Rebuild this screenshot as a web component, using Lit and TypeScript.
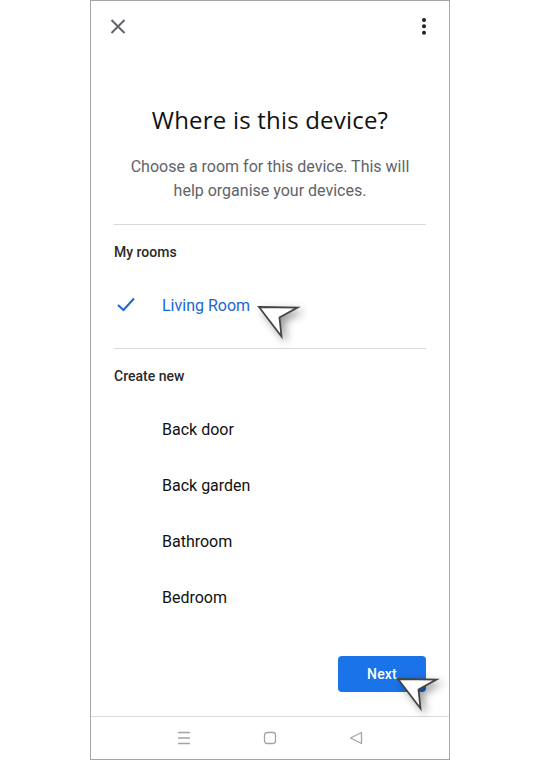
import { LitElement, html, css, svg } from 'lit';
import { customElement } from 'lit/decorators.js';

const newRooms = ['Back door', 'Back garden', 'Bathroom', 'Bedroom'];

// the tutorial arrow, tip at the top left of its box
const pointer = svg`<path d="M2 2 L40.5 2.5 L22.5 12.5 L24.5 31.5 Z" fill="#fff" stroke="#444" stroke-width="1.8"/>`;

@customElement('app-root')
export class AppRoot extends LitElement {
  static styles = css`
    :host {
      display: block;
      width: 540px;
      height: 760px;
      background: #fff;
      font-family: Roboto, "Liberation Sans", sans-serif;
      position: relative;
      overflow: hidden;
    }
    .phone {
      box-sizing: border-box;
      width: 360px;
      height: 760px;
      margin: 0 auto;
      border: 1px solid #a6a6a6;
      display: flex;
      flex-direction: column;
      background: #fff;
    }
    .topbar {
      height: 50px;
      flex: none;
      display: flex;
      align-items: center;
      justify-content: space-between;
      padding: 0 22px 1px 18px;
    }
    .topbar svg {
      display: block;
    }
    h1 {
      margin: 52px 0 0;
      font-family: "Open Sans", Roboto, sans-serif;
      font-weight: 400;
      font-size: 24px;
      line-height: 32px;
      letter-spacing: 0.2px;
      text-align: center;
      color: #111;
    }
    .intro {
      margin: 19px 0 0;
      font-size: 16px;
      line-height: 24px;
      text-align: center;
      color: #5f6368;
    }
    .content {
      padding: 0 23px;
      flex: 1;
      display: flex;
      flex-direction: column;
    }
    .section {
      border-top: 1px solid #d8d8d8;
    }
    .first {
      margin-top: 21px;
      padding-bottom: 15px;
    }
    .label {
      height: 50px;
      padding-top: 2px;
      display: flex;
      align-items: center;
      font-size: 14px;
      font-weight: 500;
      color: #2a2a2a;
    }
    .row {
      height: 56px;
      display: flex;
      align-items: center;
      padding-left: 48px;
      position: relative;
      font-size: 16px;
      color: #111;
    }
    .row.selected {
      color: #1a66d2;
    }
    .check {
      position: absolute;
      left: 3px;
      top: 20px;
    }
    .actions {
      margin-top: auto;
      display: flex;
      justify-content: flex-end;
      padding-bottom: 24px;
    }
    button {
      width: 88px;
      height: 36px;
      border: none;
      border-radius: 4px;
      background: #1a73e8;
      color: #fff;
      font-family: inherit;
      font-size: 14px;
      font-weight: 500;
      letter-spacing: 0.2px;
      padding: 0;
    }
    nav {
      height: 42px;
      flex: none;
      border-top: 1px solid #dcdcdc;
      display: flex;
      align-items: center;
      justify-content: center;
      gap: 72px;
    }
    nav svg {
      display: block;
    }
    .pointer {
      position: absolute;
      filter: drop-shadow(4px 4px 4px rgba(0, 0, 0, 0.4));
    }
    .pointer-room {
      left: 257px;
      top: 305px;
    }
    .pointer-next {
      left: 396px;
      top: 677px;
    }
  `;

  render() {
    return html`
      <div class="phone">
        <div class="topbar">
          <svg width="18" height="18" viewBox="0 0 18 18" fill="none" stroke="#5f6368" stroke-width="2">
            <path d="M2.5 3 L15.5 16 M15.5 3 L2.5 16" />
          </svg>
          <svg width="6" height="18" viewBox="0 0 6 18" fill="#202124">
            <circle cx="3" cy="3" r="2" />
            <circle cx="3" cy="9.3" r="2" />
            <circle cx="3" cy="15.7" r="2" />
          </svg>
        </div>
        <h1>Where is this device?</h1>
        <p class="intro">Choose a room for this device. This will<br />help organise your devices.</p>
        <div class="content">
          <div class="section first">
            <div class="label">My rooms</div>
            <div class="row selected">
              <svg class="check" width="18" height="15" viewBox="0 0 18 15" fill="none" stroke="#1a66d2" stroke-width="2">
                <path d="M1 8 L6.5 13 L17 1.5" />
              </svg>
              Living Room
            </div>
          </div>
          <div class="section">
            <div class="label">Create new</div>
            ${newRooms.map((room) => html`<div class="row">${room}</div>`)}
          </div>
          <div class="actions"><button>Next</button></div>
        </div>
        <nav>
          <svg width="14" height="14" viewBox="0 0 14 14" fill="none" stroke="#a3a3a3" stroke-width="1.3">
            <path d="M1 1.5 H13 M1 7 H13 M1 12.5 H13" />
          </svg>
          <svg width="14" height="14" viewBox="0 0 14 14" fill="none" stroke="#a3a3a3" stroke-width="1.3">
            <rect x="1.5" y="1.5" width="11" height="11" rx="2.5" />
          </svg>
          <svg width="14" height="14" viewBox="0 0 14 14" fill="none" stroke="#a3a3a3" stroke-width="1.3">
            <path d="M12.5 1.5 V12.5 L1.5 7 Z" stroke-linejoin="round" />
          </svg>
        </nav>
      </div>
      <svg class="pointer pointer-room" width="48" height="42" viewBox="0 0 48 42">${pointer}</svg>
      <svg class="pointer pointer-next" width="48" height="42" viewBox="0 0 48 42">${pointer}</svg>
    `;
  }
}
